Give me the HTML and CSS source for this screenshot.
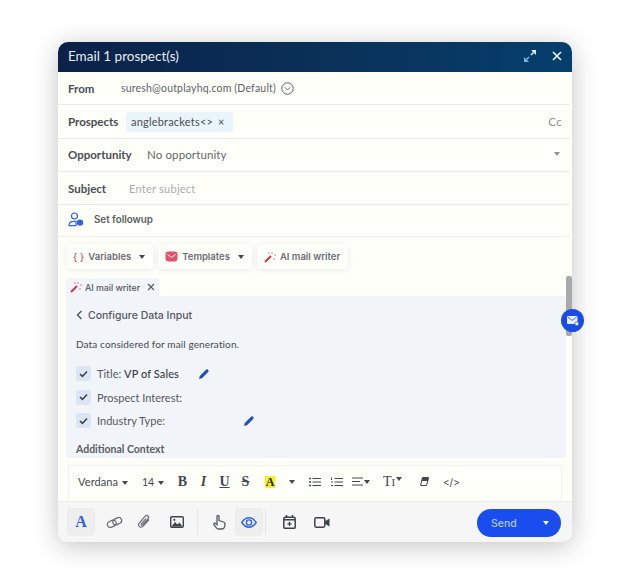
FILE: index.html
```html
<!DOCTYPE html>
<html lang="en">
<head>
<meta charset="utf-8">
<title>Email 1 prospect(s)</title>
<link rel="stylesheet" href="styles.css">
</head>
<body>
<div class="modal">
  <header class="head">
    <span class="head-title">Email 1 prospect(s)</span>
    <span class="head-icons">
      <svg width="12" height="12" viewBox="0 0 12 12"><path d="M7 0H12V5Z" fill="#d8ebf7"/><path d="M9.5 2.5L7 5" stroke="#d8ebf7" stroke-width="1.6"/><path d="M5 12H0V7Z" fill="#6fb5e6"/><path d="M2.5 9.5L5 7" stroke="#6fb5e6" stroke-width="1.6"/></svg>
      <svg width="10" height="10" viewBox="0 0 10 10"><path d="M1 1L9 9M9 1L1 9" stroke="#e8f2f8" stroke-width="1.7" fill="none"/></svg>
    </span>
  </header>

  <div class="row row-from">
    <span class="label label-from">From</span>
    <span class="from-val">suresh@outplayhq.com (Default)</span>
    <svg class="from-chev" width="13" height="13" viewBox="0 0 13 13"><circle cx="6.5" cy="6.5" r="5.7" fill="none" stroke="#5c5f66" stroke-width="1"/><path d="M3.8 5.3L6.5 8 9.2 5.3" fill="none" stroke="#5c5f66" stroke-width="1"/></svg>
  </div>

  <div class="row row-prospects">
    <span class="label label-prospects">Prospects</span>
    <span class="chip">anglebrackets&lt;&gt; <span class="chip-x">×</span></span>
    <span class="cc">Cc</span>
  </div>

  <div class="row row-opp">
    <span class="label label-opp">Opportunity</span>
    <span class="opp-val">No opportunity</span>
    <span class="caret caret-grey"></span>
  </div>

  <div class="row row-subject">
    <span class="label label-subject">Subject</span>
    <span class="placeholder">Enter subject</span>
  </div>

  <div class="row row-follow">
    <svg class="follow-ic" width="16" height="15" viewBox="0 0 16 15"><circle cx="6.5" cy="4" r="3" fill="none" stroke="#2f62e0" stroke-width="1.2"/><path d="M1 13.6C1 10.8 3 9.4 6 9.4H8V13.6Z" fill="none" stroke="#2f62e0" stroke-width="1.2"/><circle cx="12" cy="10.6" r="3.2" fill="#2f62e0"/></svg>
    <span class="follow-text">Set followup</span>
  </div>

  <div class="tools">
    <button class="tool">
      <span class="tool-brace">{ }</span>Variables<span class="caret caret-dark"></span>
    </button>
    <button class="tool">
      <svg width="13" height="11" viewBox="0 0 13 11"><rect x=".5" y=".5" width="12" height="10" rx="3" fill="#e4506a"/><path d="M2.5 3.5L6.5 6.5 10.5 3.5" fill="none" stroke="#fff" stroke-width="1"/></svg>
      Templates<span class="caret caret-dark"></span>
    </button>
    <button class="tool">
      <svg class="wand" width="12" height="12" viewBox="0 0 12 12"><path d="M1 11L7 5" stroke="#d6304f" stroke-width="2"/><path d="M8 1V3M10 4H12M4 2H6M10 7V9" stroke="#e4808f" stroke-width="1"/></svg>
      AI mail writer
    </button>
  </div>

  <div class="tab-strip">
    <div class="tab">
      <svg class="wand" width="12" height="12" viewBox="0 0 12 12"><path d="M1 11L7 5" stroke="#d6304f" stroke-width="2"/><path d="M8 1V3M10 4H12M4 2H6M10 7V9" stroke="#e4808f" stroke-width="1"/></svg>
      <span>AI mail writer</span>
      <svg class="tab-x" width="8" height="8" viewBox="0 0 8 8"><path d="M1 1L7 7M7 1L1 7" stroke="#55585f" stroke-width="1.1"/></svg>
    </div>
  </div>

  <section class="panel">
    <div class="back">
      <svg width="7" height="10" viewBox="0 0 7 10"><path d="M5.5 1L1.5 5 5.5 9" fill="none" stroke="#50535a" stroke-width="1.4"/></svg>
      Configure Data Input
    </div>
    <p class="note">Data considered for mail generation.</p>
    <div class="check-row check-first">
      <span class="box"><svg width="9" height="8" viewBox="0 0 9 8"><path d="M1 4L3.4 6.4 8 1.4" fill="none" stroke="#3a3d44" stroke-width="1.5"/></svg></span>
      <span class="check-label">Title: <b>VP of Sales</b></span>
      <svg class="pencil pencil-title" width="10" height="10" viewBox="0 0 10 10"><path d="M0 10L.8 7 7 .8C7.6.2 8.4.2 9 .8S9.8 2.4 9.2 3L3 9.2Z" fill="#1f4fc8"/></svg>
    </div>
    <div class="check-row">
      <span class="box"><svg width="9" height="8" viewBox="0 0 9 8"><path d="M1 4L3.4 6.4 8 1.4" fill="none" stroke="#3a3d44" stroke-width="1.5"/></svg></span>
      <span class="check-label">Prospect Interest:</span>
    </div>
    <div class="check-row">
      <span class="box"><svg width="9" height="8" viewBox="0 0 9 8"><path d="M1 4L3.4 6.4 8 1.4" fill="none" stroke="#3a3d44" stroke-width="1.5"/></svg></span>
      <span class="check-label">Industry Type:</span>
      <svg class="pencil pencil-industry" width="10" height="10" viewBox="0 0 10 10"><path d="M0 10L.8 7 7 .8C7.6.2 8.4.2 9 .8S9.8 2.4 9.2 3L3 9.2Z" fill="#1f4fc8"/></svg>
    </div>
    <div class="context">Additional Context</div>
  </section>

  <div class="format">
    <span class="fmt-font">Verdana<span class="caret caret-dark"></span></span>
    <span class="fmt-size">14<span class="caret caret-dark"></span></span>
    <span class="fmt-letter fmt-b">B</span>
    <span class="fmt-letter fmt-i">I</span>
    <span class="fmt-letter fmt-u">U</span>
    <span class="fmt-letter fmt-s">S</span>
    <span class="fmt-hl">A</span>
    <span class="caret caret-dark fmt-hl-caret"></span>
    <svg class="fmt-ul" width="12" height="10" viewBox="0 0 12 10"><path d="M3.5 1.5H12M3.5 5H12M3.5 8.5H12" stroke="#44474e" stroke-width="1.2"/><path d="M0 1.5H2M0 5H2M0 8.5H2" stroke="#44474e" stroke-width="1.4"/></svg>
    <svg class="fmt-ol" width="12" height="10" viewBox="0 0 12 10"><path d="M3.5 1.5H12M3.5 5H12M3.5 8.5H12" stroke="#44474e" stroke-width="1.2"/><path d="M.5 .5V3M0 5H2M0 8.5H2" stroke="#44474e" stroke-width="1.1"/></svg>
    <span class="fmt-align"><svg width="11" height="9" viewBox="0 0 11 9"><path d="M0 1H11M0 4.5H8M0 8H11" stroke="#44474e" stroke-width="1.2"/></svg><span class="caret caret-dark caret-raised"></span></span>
    <span class="fmt-tt">T<small>I</small><span class="caret caret-dark caret-raised"></span></span>
    <svg class="fmt-erase" width="9" height="9" viewBox="0 0 9 9"><path d="M2.5 .5H8.5L6.5 8.5H.5Z" fill="none" stroke="#44474e" stroke-width="1"/><path d="M2.5 .5H8.5L8 4H1.6Z" fill="#44474e"/></svg>
    <span class="fmt-code">&lt;/&gt;</span>
  </div>

  <footer class="foot">
    <span class="foot-btn foot-active gap-7"><span class="letter-a">A</span></span>
    <span class="foot-btn gap-4">
      <svg width="17" height="13" viewBox="0 0 17 13"><g fill="none" stroke="#696c73" stroke-width="1.2" transform="rotate(-25 8.5 6.5)"><rect x="1" y="3.5" width="9" height="6" rx="3"/><rect x="7" y="3.5" width="9" height="6" rx="3"/></g></svg>
    </span>
    <span class="foot-btn gap-7">
      <svg width="14" height="16" viewBox="0 0 14 16"><path d="M12 5.5L6.2 12.2C5 13.5 3.2 13.5 2.3 12.6S1.2 10.2 2.4 8.9L8 2.4C8.9 1.3 10.2 1.2 11 2S11.8 3.8 11 4.8L5.8 10.7C5.3 11.2 4.7 11.2 4.4 10.8S4.2 10 4.7 9.5L9 4.6" fill="none" stroke="#696c73" stroke-width="1.2"/></svg>
    </span>
    <span class="foot-btn gap-7">
      <svg width="14" height="12" viewBox="0 0 14 12"><rect x=".7" y=".7" width="12.6" height="10.6" rx="1.3" fill="none" stroke="#3f4249" stroke-width="1.4"/><path d="M1.5 10.5L5 6 7.5 8.5 9.5 6.5 12.5 10.5Z" fill="#3f4249"/><circle cx="4.3" cy="3.8" r="1.1" fill="#3f4249"/></svg>
    </span>
    <span class="foot-sep gap-8"></span>
    <span class="foot-btn gap-4">
      <svg width="13" height="16" viewBox="0 0 13 16"><path d="M4 8V2.2C4 1 6 1 6 2.2V6.6L10.6 8C11.8 8.4 12.2 9.2 12 10.4L11.4 13C11.2 14.2 10.4 15 9.2 15H5.6C4.6 15 4 14.6 3.4 13.8L1 10.6C.4 9.6 1.6 8.6 2.6 9.4L4 10.6Z" fill="none" stroke="#55585f" stroke-width="1.3"/></svg>
    </span>
    <span class="foot-btn foot-active gap-3">
      <svg width="16" height="11" viewBox="0 0 16 11"><path d="M.8 5.5C3 2.2 5.4.8 8 .8S13 2.2 15.2 5.5C13 8.8 10.6 10.2 8 10.2S3 8.8.8 5.5Z" fill="none" stroke="#2f62e0" stroke-width="1.4"/><circle cx="8" cy="5.5" r="2.6" fill="none" stroke="#2f62e0" stroke-width="1.4"/></svg>
    </span>
    <span class="foot-sep gap-10"></span>
    <span class="foot-btn gap-7">
      <svg width="13" height="14" viewBox="0 0 13 14"><rect x=".8" y="2.3" width="11.4" height="11" rx="1.4" fill="none" stroke="#3f4249" stroke-width="1.5"/><path d="M.8 4H12.2V5.5H.8Z" fill="#3f4249"/><path d="M3.5 0V3M9.5 0V3" stroke="#3f4249" stroke-width="1.5"/><path d="M6.5 6.8V11M4.4 8.9H8.6" stroke="#3f4249" stroke-width="1.3"/></svg>
    </span>
    <span class="foot-btn">
      <svg width="16" height="11" viewBox="0 0 16 11"><rect x=".8" y=".8" width="10" height="9.4" rx="1.4" fill="none" stroke="#3f4249" stroke-width="1.5"/><path d="M11 4.2L15.5 1.5V9.5L11 6.8Z" fill="#3f4249"/></svg>
    </span>
    <span class="send">
      <span class="send-text">Send</span>
      <span class="caret caret-white"></span>
    </span>
  </footer>

  <span class="scrollbar"></span>
  <span class="fab">
    <svg width="12" height="10" viewBox="0 0 12 10"><rect x="0" y="0" width="10.5" height="8" rx="1" fill="#e6edff"/><path d="M.8 1L5.2 4.4 9.8 1" fill="none" stroke="#2457e6" stroke-width=".8"/><circle cx="9.8" cy="7.8" r="2" fill="#e6edff" stroke="#2457e6" stroke-width=".7"/></svg>
  </span>
</div>
</body>
</html>
```
FILE: styles.css
```css
* { box-sizing: border-box; }
html, body { margin: 0; padding: 0; background: #fff; }
body { width: 630px; height: 583px; overflow: hidden; font-family: "Lato", sans-serif; color: #45484f; padding-top: 42px; }

.modal { position: relative; width: 514px; height: 500px; margin-left: 58px; background: #fffffa; border-radius: 10px; box-shadow: 0 4px 26px rgba(0,0,0,.24); display: flex; flex-direction: column; }

.head { height: 30px; flex: none; border-radius: 10px 10px 0 0; background: linear-gradient(90deg, #0b2148 0%, #0a3057 50%, #053f6d 100%); display: flex; align-items: center; justify-content: space-between; padding: 0 10px 2px 10px; color: #e9eef2; }
.head-title { font-size: 13.5px; }
.head-icons { display: flex; align-items: center; gap: 16px; }

.row { display: flex; align-items: center; flex: none; border-bottom: 1px solid #e9e9ee; padding-left: 10px; position: relative; margin-right: 2px; }
.row-from { height: 33px; }
.row-prospects { height: 34px; }
.row-opp { height: 33px; padding-bottom: 2px; }
.row-subject { height: 33px; }
.row-follow { height: 32px; padding-bottom: 3px; border-bottom-color: #efeff0; }
.label { font-size: 11.5px; font-weight: 700; color: #4a4d54; }
.label-from { width: 53px; }
.label-prospects { width: 58px; }
.label-opp { width: 79px; }
.label-subject { width: 61px; }
.from-val { font-size: 10.5px; color: #5c5f66; letter-spacing: .18px; }
.from-chev { margin-left: 5px; }
.chip { background: #e9f5fb; height: 20px; padding: 0 8px 0 5px; border-radius: 3px; display: flex; align-items: center; font-size: 11px; letter-spacing: .2px; color: #4a4d54; white-space: pre; }
.chip-x { font-size: 11px; margin-left: 2px; }
.cc { position: absolute; right: 8px; font-size: 11.5px; color: #8c8e93; letter-spacing: .3px; }
.opp-val { font-size: 11.5px; color: #63666c; letter-spacing: .12px; }
.placeholder { font-size: 11px; color: #a9abb0; letter-spacing: .25px; }
.follow-ic { margin-right: 10px; }
.follow-text { font-family: "Inter", sans-serif; font-size: 9.8px; font-weight: 600; color: #5a5d63; }

.caret { display: inline-block; width: 0; height: 0; border-left: 3.5px solid transparent; border-right: 3.5px solid transparent; border-top: 4px solid #44474e; }
.caret-grey { position: absolute; right: 10px; border-top-color: #8f9196; }
.caret-dark { margin-left: 4px; vertical-align: 1px; }
.caret-raised { vertical-align: 5px; margin-left: 1px; }
.caret-white { border-top-color: #fff; position: absolute; right: 12px; top: 12px; }

.tools { display: flex; gap: 5px; flex: none; padding: 7px 0 0 8px; height: 33px; }
.tool { display: flex; align-items: center; gap: 4px; height: 25px; border: 0; padding: 0 8px 0 7px; background: #fffffa; border-radius: 4px; box-shadow: 0 1px 5px rgba(60,60,90,.12); font-family: "Inter", sans-serif; font-size: 9.5px; font-weight: 600; color: #6a6d73; }
.tool-brace { color: #d6304f; font-family: "Inter", sans-serif; font-size: 10px; font-weight: 400; }

.tab-strip { flex: none; padding: 7px 0 0 8px; height: 26px; }
.tab { display: inline-flex; align-items: center; gap: 3px; height: 19px; padding: 0 4px; background: #f1f4f9; border-radius: 4px 4px 0 0; font-family: "Inter", sans-serif; font-size: 8.8px; font-weight: 500; color: #55585f; }
.tab-x { margin-left: 4px; }

.panel { flex: 1; min-height: 0; overflow: hidden; margin: 0 6px 0 8px; background: #f1f4f9; padding: 0 0 0 10px; border-radius: 0 4px 0 0; }
.back { display: flex; align-items: center; gap: 5px; height: 30px; padding-top: 8px; font-family: "Inter", sans-serif; font-size: 10.5px; font-weight: 500; color: #55585f; }
.note { margin: 11px 0 0; font-size: 10px; color: #45484f; letter-spacing: .12px; line-height: 14px; }
.check-row { position: relative; display: flex; align-items: center; height: 23.5px; gap: 6px; }
.check-first { margin-top: 11px; }
.box { width: 15px; height: 15px; border-radius: 3px; background: #dbe5f3; display: flex; align-items: center; justify-content: center; }
.check-label { font-size: 11px; color: #55585f; }
.check-label b { color: #3a3d44; font-weight: 500; letter-spacing: .1px; }
.pencil { position: absolute; top: 7px; }
.pencil-title { left: 123px; }
.pencil-industry { left: 168px; }
.context { margin-top: 9px; font-size: 10.5px; line-height: 14px; font-weight: 700; color: #5a5d63; }

.format { flex: none; height: 36px; margin: 7px 10px 0 10px; background: #fffffa; border-left: 1px solid #f0f0f2; border-right: 1px solid #f0f0f2; border-top: 1px solid #f2f2f4; display: flex; align-items: center; font-size: 11px; color: #44474e; padding: 0 0 4px 9px; }
.fmt-font { width: 64px; letter-spacing: .1px; }
.fmt-size { width: 30px; font-size: 10.5px; }
.fmt-letter { font-family: "Liberation Serif", serif; font-size: 14px; font-weight: 700; width: 21px; text-align: center; }
.fmt-i { font-style: italic; }
.fmt-u { text-decoration: underline; }
.fmt-s { text-decoration: line-through; }
.fmt-hl { margin-left: 9px; font-family: "Liberation Serif", serif; font-weight: 700; font-size: 12px; background: #f4f21e; width: 10px; height: 12px; line-height: 12px; text-align: center; color: #222; }
.fmt-hl-caret { margin-left: 13.5px; }
.fmt-ul { margin-left: 14.5px; }
.fmt-ol { margin-left: 10px; }
.fmt-align { margin-left: 9px; display: inline-flex; align-items: center; }
.fmt-tt { margin-left: 13px; font-family: "Liberation Serif", serif; font-size: 14px; width: 27px; }
.fmt-tt small { font-size: 11px; }
.fmt-erase { margin-left: 9.5px; }
.fmt-code { margin-left: 14.5px; font-family: "Inter", sans-serif; font-size: 10px; }

.foot { flex: none; height: 41px; background: #f6f6f6; border-top: 1px solid #eeeef0; border-radius: 0 0 10px 10px; display: flex; align-items: center; padding-left: 10px; position: relative; }
.foot-btn { width: 26px; height: 26px; display: flex; align-items: center; justify-content: center; border-radius: 3px; flex: none; }
.gap-3 { margin-right: 3px; }
.gap-4 { margin-right: 4px; }
.gap-7 { margin-right: 7px; }
.gap-8 { margin-right: 8px; }
.gap-10 { margin-right: 10px; }
.foot-active { background: #eeeeef; box-shadow: 0 0 2px rgba(0,0,0,.12); }
.letter-a { font-family: "Liberation Serif", serif; font-size: 16px; font-weight: 700; color: #2f62e0; }
.foot-sep { width: 1px; height: 26px; background: #e6e6e8; flex: none; }
.send { position: absolute; right: 11px; top: 7px; width: 84px; height: 28px; border-radius: 14px; background: #1a4df0; display: flex; align-items: center; }
.send-text { padding-left: 14px; font-family: "Inter", sans-serif; font-size: 10.5px; font-weight: 500; color: #b4c8f6; }

.scrollbar { position: absolute; right: 0; top: 234px; width: 6px; height: 60px; background: #a8a9ab; border-radius: 2px; }
.fab { position: absolute; left: 503px; top: 267px; width: 23px; height: 23px; border-radius: 50%; background: #1a4de6; display: flex; align-items: center; justify-content: center; }
```
